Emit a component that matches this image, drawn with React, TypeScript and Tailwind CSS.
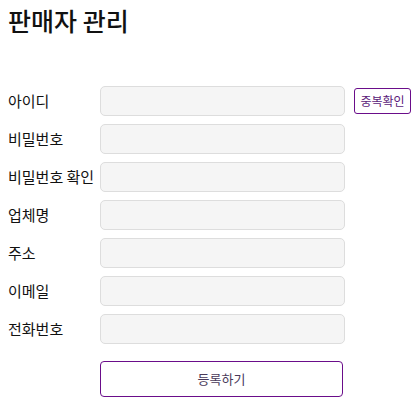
const fields = ["아이디", "비밀번호", "비밀번호 확인", "업체명", "주소", "이메일", "전화번호"];

export default function App() {
  return (
    <div
      className="px-2 pt-[4px] text-[#111]"
      style={{ fontFamily: '"Noto Sans CJK KR", "Noto Sans", sans-serif' }}
    >
      <h1 className="text-[25px] font-medium leading-[32px]">판매자 관리</h1>

      <form className="mt-[50px] flex flex-col gap-[8px]" onSubmit={(e) => e.preventDefault()}>
        {fields.map((label, i) => (
          <div key={label} className="flex items-center">
            <label className="w-[92px] shrink-0 text-[15px]">{label}</label>
            <input
              type={label.startsWith("비밀번호") ? "password" : "text"}
              className="h-[30px] w-[245px] rounded-[5px] border border-[#ddd] bg-[#f5f5f5] px-2 text-sm outline-none"
            />
            {i === 0 && (
              <button
                type="button"
                className="ml-[9px] h-[26px] w-[57px] rounded-[3px] border border-[#6a0d8a] bg-white text-[12px] text-[#5b1a7a]"
              >
                중복확인
              </button>
            )}
          </div>
        ))}

        <div className="mt-[9px] pl-[92px]">
          <button
            type="submit"
            className="h-[36px] w-[243px] rounded-[4px] border border-[#6a0d8a] bg-white text-[13px] text-[#4a3a5a]"
          >
            등록하기
          </button>
        </div>
      </form>
    </div>
  );
}
